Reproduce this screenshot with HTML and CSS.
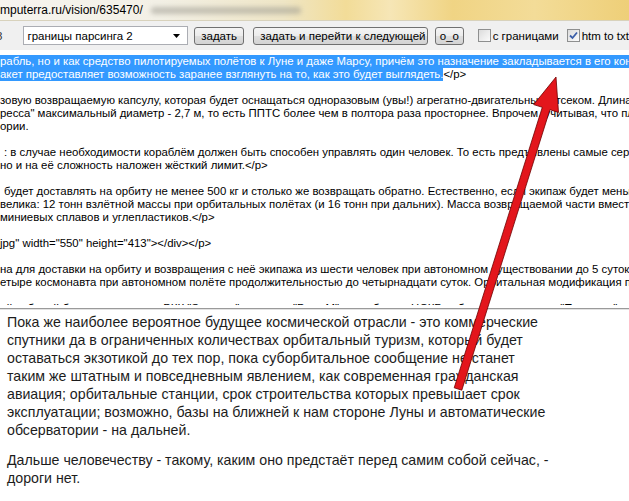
FILE: index.html
```html
<!DOCTYPE html>
<html lang="ru">
<head>
<meta charset="utf-8">
<title>Парсер</title>
<link rel="stylesheet" href="styles.css">
</head>
<body>
<div class="window">
  <div class="addr">
    <span class="url">mputerra.ru/vision/635470/</span>
    <span class="blur"></span>
  </div>
  <div class="toolbar">
    <span class="num">8</span>
    <div class="combo">
      <span class="combo-text">границы парсинга 2</span>
      <svg class="caret" width="7" height="4" viewBox="0 0 7 4"><path d="M0 0H7L3.5 4Z" fill="#000"/></svg>
    </div>
    <button class="btn btn-set">задать</button>
    <button class="btn btn-next">задать и перейти к следующей</button>
    <button class="btn btn-oo">o_o</button>
    <label class="chk chk-bounds"><span class="box"></span>с границами</label>
    <label class="chk chk-htm"><span class="box"><svg width="9" height="9" viewBox="0 0 9 9"><path d="M1 4.5L3.5 7L8 1.5" fill="none" stroke="#3b5ea8" stroke-width="1.8"/></svg></span>htm to txt</label>
  </div>
  <div class="source">
    <div class="line sel-line">рабль, но и как средство пилотируемых полётов к Луне и даже Марсу, причём это назначение закладывается в его конструкцию</div>
    <div class="line"><span class="sel">акет предоставляет возможность заранее взглянуть на то, как это будет выглядеть.</span>&lt;/p&gt;</div>
    <div class="line"></div>
    <div class="line">зовую возвращаемую капсулу, которая будет оснащаться одноразовым (увы!) агрегатно-двигательным отсеком. Длина корабля</div>
    <div class="line">ресса" максимальный диаметр - 2,7 м, то есть ППТС более чем в полтора раза просторнее. Впрочем, учитывая, что плановые</div>
    <div class="line">ории.</div>
    <div class="line"></div>
    <div class="line shift">: в случае необходимости кораблём должен быть способен управлять один человек. То есть предъявлены самые серьёзные</div>
    <div class="line">но и на её сложность наложен жёсткий лимит.&lt;/p&gt;</div>
    <div class="line"></div>
    <div class="line shift">будет доставлять на орбиту не менее 500 кг и столько же возвращать обратно. Естественно, если экипаж будет меньше</div>
    <div class="line">велика: 12 тонн взлётной массы при орбитальных полётах (и 16 тонн при дальних). Масса возвращаемой части вместе с системой</div>
    <div class="line">миниевых сплавов и углепластиков.&lt;/p&gt;</div>
    <div class="line"></div>
    <div class="line">jpg" width="550" height="413"&gt;&lt;/div&gt;&lt;/p&gt;</div>
    <div class="line"></div>
    <div class="line">на для доставки на орбиту и возвращения с неё экипажа из шести человек при автономном существовании до 5 суток. На</div>
    <div class="line">етыре космонавта при автономном полёте продолжительностью до четырнадцати суток. Орбитальная модификация предусматривает</div>
    <div class="line"></div>
    <div class="line">ой кабиной будет создаваться РКК "Энергия", а ракету "Русь-М" разработает ЦСКБ, а бортовые системы "Прогресс"</div>
  </div>
  <div class="preview">
    <p>Пока же наиболее вероятное будущее космической отрасли - это коммерческие<br>
    спутники да в ограниченных количествах орбитальный туризм, который будет<br>
    оставаться экзотикой до тех пор, пока суборбитальное сообщение не станет<br>
    таким же штатным и повседневным явлением, как современная гражданская<br>
    авиация; орбитальные станции, срок строительства которых превышает срок<br>
    эксплуатации; возможно, базы на ближней к нам стороне Луны и автоматические<br>
    обсерватории - на дальней.</p>
    <p>Дальше человечеству - такому, каким оно предстаёт перед самим собой сейчас, -<br>
    дороги нет.</p>
  </div>
  <svg class="arrow" width="629" height="501" viewBox="0 0 629 501">
    <polygon points="556,77 558.5,112.4 549.9,109.7 461.8,390.2 454.2,387.8 542.3,107.3 533.7,104.6" fill="#e3161c" stroke="#6e0000" stroke-width="0.8" stroke-linejoin="round"/>
  </svg>
</div>
</body>
</html>
```

FILE: styles.css
```css
html, body {
  margin: 0;
  padding: 0;
  background: #fff;
}

.window {
  position: relative;
  width: 629px;
  height: 501px;
  overflow: hidden;
  font-family: "Liberation Sans", Arial, sans-serif;
}

.addr {
  height: 21px;
  display: flex;
  align-items: center;
  gap: 4px;
  background: linear-gradient(90deg, #f6f4ee 0%, #f3f0e6 25%, #efe6c6 45%, #f2dc98 55%, #f6e6b6 62%, #f0d484 72%, #f3dc98 85%, #eecf78 100%);
  border-bottom: 1px solid #d8d2bc;
  box-sizing: border-box;
}

.url {
  font-size: 12px;
  color: #000;
  white-space: nowrap;
}

.blur {
  width: 150px;
  height: 7px;
  margin-left: 4px;
  background: #9c9a90;
  opacity: 0.55;
  filter: blur(2.5px);
  border-radius: 3px;
}

.toolbar {
  height: 29px;
  display: flex;
  align-items: center;
  background: #f0f0f0;
  font-size: 11.5px;
  color: #000;
  white-space: nowrap;
}

.num {
  margin-left: -4px;
  width: 29px;
  color: #333;
}

.combo {
  box-sizing: border-box;
  width: 173px;
  height: 19px;
  border: 1px solid #abadb3;
  background: #fff;
  display: flex;
  align-items: center;
  justify-content: space-between;
  padding: 0 7px 0 3px;
}

.btn {
  box-sizing: border-box;
  height: 18px;
  padding: 0 6px;
  border: 1px solid #707070;
  border-radius: 3px;
  background: linear-gradient(#f4f4f4 0%, #ececec 48%, #dedede 52%, #d3d3d3 100%);
  font-family: inherit;
  font-size: 11.5px;
  color: #000;
  line-height: 16px;
}

.btn-set {
  margin-left: 6px;
  width: 52px;
}

.btn-next {
  margin-left: 9px;
  width: 175px;
}

.btn-oo {
  margin-left: 7px;
  width: 30px;
  padding: 0;
}

.chk {
  display: flex;
  align-items: center;
  gap: 2px;
}

.chk-bounds {
  margin-left: 14px;
}

.chk-htm {
  margin-left: 8px;
}

.box {
  box-sizing: border-box;
  width: 13px;
  height: 13px;
  border: 1px solid #8e8f8f;
  background: linear-gradient(135deg, #dcdcdc, #fbfbfb);
  display: flex;
  align-items: center;
  justify-content: center;
}

.source {
  height: 255px;
  box-sizing: border-box;
  padding-top: 5px;
  background: #fff;
  font-size: 11.4px;
  color: #000;
  overflow: hidden;
}

.line {
  height: 13px;
  line-height: 13px;
  white-space: nowrap;
}

.shift {
  padding-left: 4px;
}

.sel-line {
  background: #3399ff;
  color: #fff;
}

.sel {
  display: inline-block;
  height: 13px;
  background: #3399ff;
  color: #fff;
}

.preview {
  margin-top: 3px;
  border-top: 1px solid #9a9a9a;
  box-shadow: inset 0 1px 0 #e2e2e2;
  padding: 4px 0 0 7px;
  font-size: 14.2px;
  line-height: 18px;
  color: #1c1c1c;
  height: 193px;
  box-sizing: border-box;
}

.preview p {
  margin: 0 0 12px;
  white-space: nowrap;
}

.arrow {
  position: absolute;
  top: 0;
  left: 0;
  pointer-events: none;
}
```
